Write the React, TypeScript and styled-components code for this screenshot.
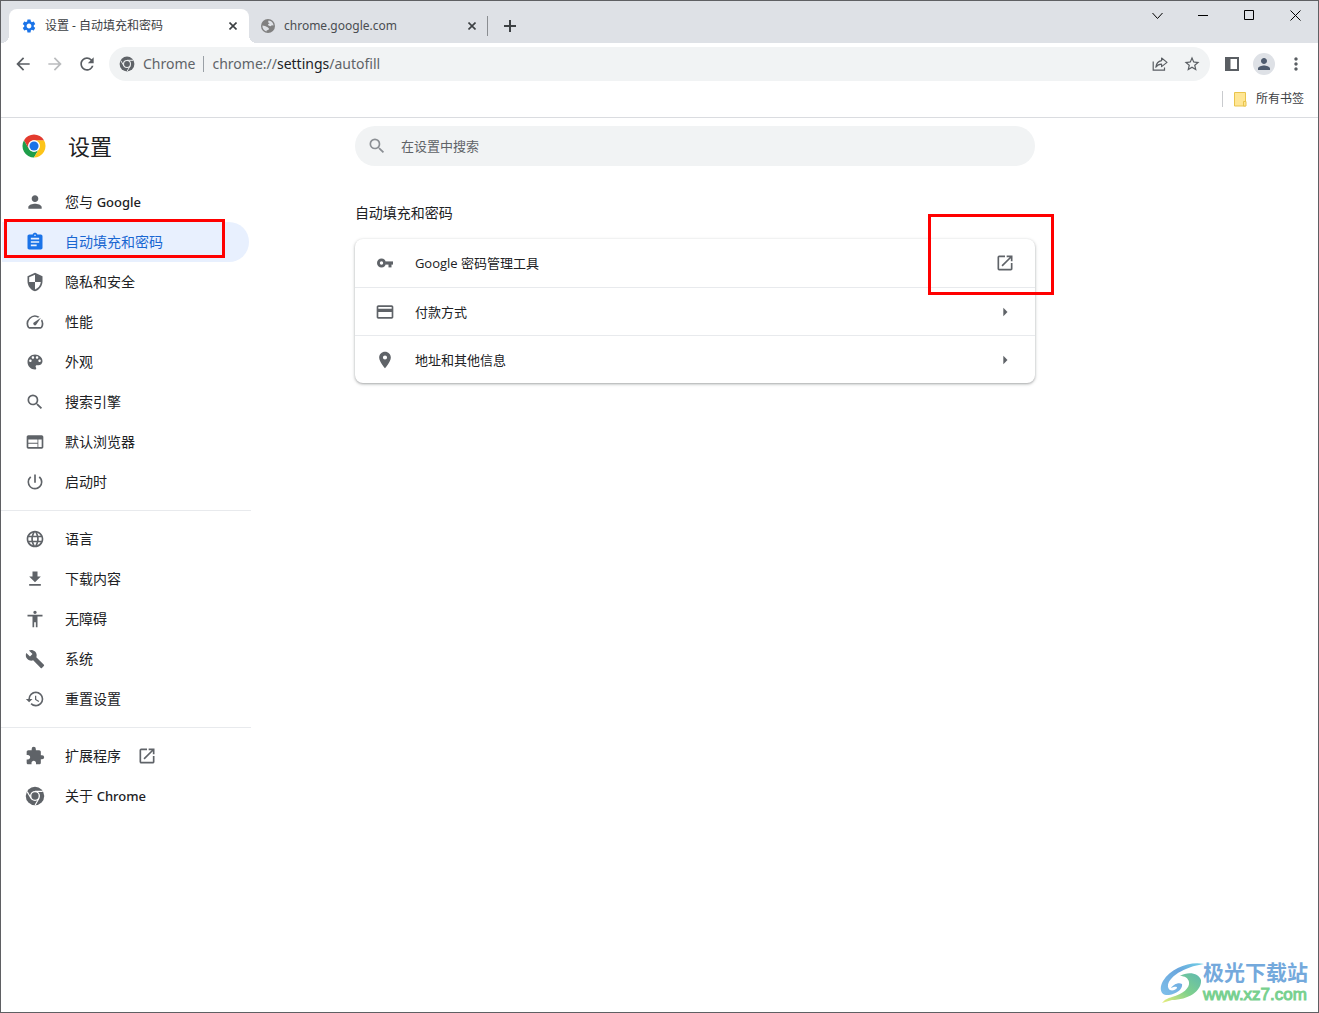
import React from 'react';
import styled, { createGlobalStyle, css } from 'styled-components';
import type { IconType } from 'react-icons';
import {
  MdAccessibility,
  MdAssignment,
  MdBuild,
  MdCreditCard,
  MdExtension,
  MdFileDownload,
  MdHistory,
  MdLanguage,
  MdMoreVert,
  MdOpenInNew,
  MdPerson,
  MdPlace,
  MdPowerSettingsNew,
  MdSearch,
  MdSecurity,
  MdSettings,
  MdSpeed,
  MdStarBorder,
  MdWeb,
  MdArrowBack,
  MdArrowForward,
  MdArrowRight,
  MdRefresh,
} from 'react-icons/md';

const color = {
  frame: '#5f6063',
  strip: '#dee1e6',
  field: '#f1f3f4',
  text: '#202124',
  muted: '#5f6368',
  accent: '#1a73e8',
  accentText: '#1967d2',
  accentBg: '#e8f0fe',
  line: '#e8eaed',
  mark: '#ff0000',
};

const browserFont = '"Noto Sans", "Noto Sans CJK SC", sans-serif';

const GlobalStyle = createGlobalStyle`
  *, *::before, *::after { box-sizing: border-box; }
  body {
    margin: 0;
    background: #fff;
    color: ${color.text};
    font-family: "Open Sans", "Noto Sans CJK SC", sans-serif;
    font-size: 14px;
    line-height: 20px;
  }
  button, input { font: inherit; color: inherit; }
  button { padding: 0; border: 0; background: none; }
  a { color: inherit; text-decoration: none; }
  h1, h2 { margin: 0; font-weight: 400; }
  svg { display: block; flex: none; }
`;

const Window = styled.div`
  position: relative;
  display: flex;
  flex-direction: column;
  min-height: 100vh;
  border: 1px solid ${color.frame};
`;

/* ---------- tab strip ---------- */

const TabStrip = styled.header`
  display: flex;
  align-items: flex-end;
  height: 42px;
  padding-left: 8px;
  background: ${color.strip};
  font-family: ${browserFont};
`;

const Tab = styled.div<{ $active?: boolean }>`
  position: relative;
  display: flex;
  align-items: center;
  width: ${(p) => (p.$active ? 240 : 238)}px;
  height: 34px;
  padding: ${(p) => (p.$active ? '0 8px 0 12px' : '0 7px 0 11px')};
  border-radius: 8px 8px 0 0;
  color: ${(p) => (p.$active ? '#3c4043' : '#4a4d51')};
  ${(p) =>
    p.$active &&
    css`
      background: #fff;
      &::before,
      &::after {
        content: '';
        position: absolute;
        bottom: 0;
        width: 8px;
        height: 8px;
      }
      &::before {
        left: -8px;
        background: radial-gradient(circle at 0 0, transparent 8px, #fff 8px);
      }
      &::after {
        right: -8px;
        background: radial-gradient(circle at 100% 0, transparent 8px, #fff 8px);
      }
    `}
`;

const TabTitle = styled.span`
  flex: 1;
  margin-left: 8px;
  font-size: 12px;
  line-height: 22px;
  white-space: nowrap;
`;

const SmallButton = styled.button`
  display: grid;
  place-items: center;
  width: 16px;
  height: 16px;
  color: #3c4043;
`;

const TabDivider = styled.span`
  align-self: flex-end;
  width: 1px;
  height: 20px;
  margin-bottom: 7px;
  background: #8a8d91;
`;

const NewTab = styled.button`
  display: grid;
  place-items: center;
  width: 28px;
  height: 28px;
  margin: 0 0 3px 8px;
  color: #3c4043;
`;

const WindowControls = styled.div`
  display: flex;
  align-self: flex-start;
  margin-left: auto;
`;

const ControlButton = styled.button`
  display: grid;
  place-items: center;
  width: 46px;
  height: 28px;
  color: #000;
`;

/* ---------- toolbar ---------- */

const Toolbar = styled.div`
  display: flex;
  align-items: center;
  gap: 8px;
  height: 42px;
  padding: 0 8px;
  font-family: ${browserFont};
`;

const ButtonGroup = styled.div`
  display: flex;
  align-items: center;
  gap: 4px;
`;

const ToolButton = styled.button<{ $faded?: boolean }>`
  display: grid;
  place-items: center;
  width: 28px;
  height: 28px;
  color: ${(p) => (p.$faded ? '#babcbe' : '#5a5e63')};
`;

const Omnibox = styled.div`
  display: flex;
  flex: 1;
  align-items: center;
  height: 34px;
  padding: 0 4px 0 10px;
  border-radius: 17px;
  background: ${color.field};
  color: ${color.muted};
  font-size: 14px;
`;

const SiteChip = styled.button`
  display: flex;
  align-items: center;
  gap: 8px;
`;

const ChipDivider = styled.span`
  width: 1px;
  height: 16px;
  margin: 0 8px;
  background: #9aa0a6;
`;

const Address = styled.div`
  flex: 1;
  outline: none;
  white-space: nowrap;
`;

const Host = styled.span`
  color: ${color.text};
`;

const Avatar = styled.span`
  display: grid;
  place-items: center;
  width: 22px;
  height: 22px;
  border-radius: 50%;
  background: ${color.strip};
  color: #4f5b6e;
`;

const BookmarkBar = styled.div`
  display: flex;
  align-items: center;
  justify-content: flex-end;
  height: 33px;
  padding: 0 14px 4px;
  border-bottom: 1px solid #dadce0;
  font-family: ${browserFont};
`;

const BookmarkDivider = styled.span`
  width: 1px;
  height: 16px;
  margin-right: 11px;
  background: #c9cbce;
`;

const Bookmark = styled.button`
  display: flex;
  align-items: center;
  gap: 9px;
  color: #3c4043;
  font-size: 12px;
  line-height: 22px;
`;

/* ---------- settings page ---------- */

const Page = styled.div`
  display: grid;
  grid-template-columns: minmax(250px, 5fr) minmax(auto, 680px) 4fr;
  flex: 1;
`;

const Sidebar = styled.aside`
  width: 250px;
`;

const Brand = styled.div`
  display: flex;
  align-items: center;
  gap: 22px;
  height: 56px;
  padding-left: 21px;
`;

const Title = styled.h1`
  font-size: 22px;
  line-height: 32px;
`;

const Menu = styled.nav`
  padding-top: 8px;
`;

const MenuItem = styled.a<{ $selected?: boolean }>`
  position: relative;
  display: flex;
  align-items: center;
  height: 40px;
  margin: 0 2px 0 1px;
  padding-left: 23px;
  border-radius: 0 20px 20px 0;
  color: ${(p) => (p.$selected ? color.accentText : color.text)};
  background: ${(p) => (p.$selected ? color.accentBg : 'transparent')};
  > svg {
    color: ${(p) => (p.$selected ? color.accent : color.muted)};
  }
`;

const MenuLabel = styled.span`
  margin: 0 16px 0 20px;
`;

const Latin = styled.span`
  font-family: "Noto Sans", sans-serif;
  font-weight: 500;
  font-size: 13px;
`;

const MenuDivider = styled.hr`
  height: 1px;
  margin: 8px 0;
  border: 0;
  background: ${color.line};
`;

const Content = styled.main`
  padding-top: 8px;
`;

const SearchBox = styled.label`
  display: flex;
  align-items: center;
  gap: 14px;
  height: 40px;
  padding: 0 12px;
  border-radius: 20px;
  background: ${color.field};
  color: #8b8f94;
`;

const SearchInput = styled.input`
  flex: 1;
  padding: 0;
  border: 0;
  outline: none;
  background: transparent;
  font-size: 13px;
  &::placeholder {
    color: ${color.muted};
    opacity: 1;
  }
`;

const SectionTitle = styled.h2`
  padding: 37px 0 16px;
  font-size: 14px;
  line-height: 20px;
`;

const Card = styled.div`
  border-radius: 8px;
  background: #fff;
  box-shadow: 0 1px 2px rgba(60, 64, 67, 0.3), 0 1px 3px 1px rgba(60, 64, 67, 0.15);
`;

const CardRow = styled.a`
  position: relative;
  display: flex;
  align-items: center;
  gap: 20px;
  height: 48px;
  padding: 0 20px;
  color: ${color.muted};
  & + & {
    border-top: 1px solid ${color.line};
  }
`;

const RowLabel = styled.span`
  flex: 1;
  color: ${color.text};
  font-size: 13px;
`;

const MenuMark = styled.span`
  position: absolute;
  top: -3px;
  left: 2px;
  width: 221px;
  height: 39px;
  border: 3px solid ${color.mark};
`;

const RowMark = styled.span`
  position: absolute;
  z-index: 1;
  top: -25px;
  right: -19px;
  width: 126px;
  height: 81px;
  border: 3px solid ${color.mark};
`;

/* ---------- watermark ---------- */

const Watermark = styled.a`
  position: absolute;
  right: 10px;
  bottom: 7px;
  display: flex;
  align-items: center;
  font-family: "Liberation Sans", "Noto Sans CJK SC", sans-serif;
  white-space: nowrap;
`;

const WatermarkText = styled.span`
  display: flex;
  flex-direction: column;
  margin-left: -3px;
`;

const WatermarkName = styled.span`
  color: #74a9dc;
  font-size: 21px;
  font-weight: 700;
  line-height: 24px;
`;

const WatermarkSite = styled.span`
  color: #78d08f;
  -webkit-text-stroke: 1px #78d08f;
  font-size: 17px;
  line-height: 20px;
`;

/* ---------- drawings ---------- */

const RED = 'M3.22 12A24 24 0 0 1 44.78 12L24 12A12 12 0 0 0 13.61 30Z';
const YELLOW = 'M44.78 12A24 24 0 0 1 24 48L34.39 30A12 12 0 0 0 24 12Z';
const GREEN = 'M24 48A24 24 0 0 1 3.22 12L13.61 30A12 12 0 0 0 34.39 30Z';

const ChromeLogo = () => (
  <svg width="24" height="24" viewBox="-1 -1 50 50" aria-hidden>
    <circle cx="24" cy="24" r="13" fill="#fff" />
    <path d={GREEN} fill="#1e9e4a" />
    <path d={YELLOW} fill="#fcc419" />
    <path d={RED} fill="#e33b2e" />
    <circle cx="24" cy="24" r="12" fill="#fff" />
    <circle cx="24" cy="24" r="9.5" fill="#1a73e8" />
  </svg>
);

const ChromeMono = ({ size, gap = '#fff' }: { size: number; gap?: string }) => (
  <svg width={size} height={size} viewBox="-2 -2 52 52" aria-hidden>
    <circle cx="24" cy="24" r="24" fill="#5f6368" />
    <circle cx="24" cy="24" r="13" fill={gap} />
    <path d="M24 12H44M13.61 30L3.6 12.6M34.39 30L24.4 47.4" stroke={gap} strokeWidth="3" />
    <circle cx="24" cy="24" r="9.5" fill="#5f6368" />
  </svg>
);

const PaletteIcon = () => (
  <svg width="20" height="20" viewBox="0 0 24 24" fill="currentColor" aria-hidden>
    <path d="M12 3c-4.97 0-9 4.03-9 9s4.03 9 9 9c.83 0 1.5-.67 1.5-1.5 0-.39-.15-.74-.39-1.01-.23-.26-.38-.61-.38-.99 0-.83.67-1.5 1.5-1.5H16c2.76 0 5-2.24 5-5 0-4.42-4.03-8-9-8zm-5.5 9c-.83 0-1.5-.67-1.5-1.5S5.67 9 6.5 9 8 9.67 8 10.5 7.33 12 6.5 12zm3-4C8.67 8 8 7.33 8 6.5S8.67 5 9.5 5s1.5.67 1.5 1.5S10.33 8 9.5 8zm5 0c-.83 0-1.5-.67-1.5-1.5S13.67 5 14.5 5s1.5.67 1.5 1.5S15.33 8 14.5 8zm3 4c-.83 0-1.5-.67-1.5-1.5S16.67 9 17.5 9s1.5.67 1.5 1.5-.67 1.5-1.5 1.5z" />
  </svg>
);

const KeyIcon = () => (
  <svg width="20" height="20" viewBox="0 0 20 20" fill="none" stroke="currentColor" aria-hidden>
    <circle cx="6.5" cy="10" r="3.1" strokeWidth="2.8" />
    <path d="M10.5 10H18" strokeWidth="3.2" />
    <path d="M15 10V14.4" strokeWidth="3" />
  </svg>
);

const GlobeIcon = () => (
  <svg width="16" height="16" viewBox="0 0 16 16" aria-hidden>
    <circle cx="8" cy="8" r="7" fill="#808080" />
    <path
      d="M8.6 2.4C11.4 2.6 13.4 4.8 13.6 7.4L11.8 7.2L10.6 8.2L8.4 7.6L8 6.2L9.6 5.2L8 4.2Z"
      fill={color.strip}
    />
    <path d="M2.4 7.4L5 8L7.6 9.2L9 10.4L8.4 12L6.8 12.2L6.4 13.4C3.8 12.6 2.2 10.2 2.4 7.4Z" fill={color.strip} />
  </svg>
);

const CrossIcon = () => (
  <svg width="8" height="8" viewBox="0 0 8 8" stroke="currentColor" strokeWidth="1.6" aria-hidden>
    <path d="M0.5 0.5L7.5 7.5M7.5 0.5L0.5 7.5" />
  </svg>
);

const PlusIcon = () => (
  <svg width="12" height="12" viewBox="0 0 12 12" stroke="currentColor" strokeWidth="2" aria-hidden>
    <path d="M6 0V12M0 6H12" />
  </svg>
);

const glyph = {
  tabs: 'M0.5 3L5.5 8.5L10.5 3',
  minimize: 'M0 5.5H10',
  maximize: 'M0.5 0.5H9.5V9.5H0.5Z',
  close: 'M0.5 0.5L10.5 10.5M10.5 0.5L0.5 10.5',
};

const ControlIcon = ({ d }: { d: string }) => (
  <svg width="11" height="11" viewBox="0 0 11 11" fill="none" stroke="currentColor" aria-hidden>
    <path d={d} />
  </svg>
);

const ShareIcon = () => (
  <svg width="16" height="16" viewBox="0 0 16 16" fill="none" stroke="currentColor" strokeWidth="1.2" aria-hidden>
    <path d="M1.2 5.5V14.2H12.5V11.5" />
    <path d="M9.6 2L15 6.4L9.6 10.6V8.2C7 8.2 5.2 9.2 3.8 11.2C4.2 7.6 6.2 5.2 9.6 4.6Z" strokeLinejoin="round" />
  </svg>
);

const SidePanelIcon = () => (
  <svg width="14" height="14" viewBox="0 0 14 14" aria-hidden>
    <path d="M0 0H14V14H0ZM5.5 2V12H12V2Z" fill="currentColor" fillRule="evenodd" />
  </svg>
);

const FolderIcon = () => (
  <svg width="13" height="15" viewBox="0 0 13 15" fill="#ffe694" stroke="#e9c44c" aria-hidden>
    <path d="M0.5 0.5H11.5V14H0.5Z" />
    <path d="M9.5 9.5H12V14H9.5Z" />
  </svg>
);

const AuroraLogo = () => (
  <svg width="46" height="42" viewBox="0 0 46 42" aria-hidden>
    <defs>
      <linearGradient id="auroraBlue" x1="1" y1="0" x2="0" y2="1">
        <stop offset="0" stopColor="#6fd0e6" />
        <stop offset="0.4" stopColor="#6aa6dd" />
        <stop offset="1" stopColor="#7fc0ea" />
      </linearGradient>
      <linearGradient id="auroraGreen" x1="1" y1="0" x2="0" y2="1">
        <stop offset="0" stopColor="#5fb9b0" />
        <stop offset="0.5" stopColor="#7fd08c" />
        <stop offset="1" stopColor="#eaee7c" />
      </linearGradient>
    </defs>
    <path
      d="M44 2C30 -1 11 6 3 19C-2 28 2 34 9 33C17 32 23 27 22 22C18 20 13 23 11 26C14 25 17 24 17 26C15 29 9 30 8 25C7 16 23 5 44 2Z"
      fill="url(#auroraBlue)"
    />
    <path
      d="M20 14C28 9 39 11 41 18C42 29 28 38 12 38L2 41C5 37 9 36 12 35C23 32 30 26 29 20C28 16 25 14 20 14Z"
      fill="url(#auroraGreen)"
    />
  </svg>
);

/* ---------- data ---------- */

type Entry = {
  label: string;
  latin?: string;
  icon: IconType | 'chrome' | 'palette';
  selected?: boolean;
  external?: boolean;
};

const menuGroups: Entry[][] = [
  [
    { label: '您与 ', latin: 'Google', icon: MdPerson },
    { label: '自动填充和密码', icon: MdAssignment, selected: true },
    { label: '隐私和安全', icon: MdSecurity },
    { label: '性能', icon: MdSpeed },
    { label: '外观', icon: 'palette' },
    { label: '搜索引擎', icon: MdSearch },
    { label: '默认浏览器', icon: MdWeb },
    { label: '启动时', icon: MdPowerSettingsNew },
  ],
  [
    { label: '语言', icon: MdLanguage },
    { label: '下载内容', icon: MdFileDownload },
    { label: '无障碍', icon: MdAccessibility },
    { label: '系统', icon: MdBuild },
    { label: '重置设置', icon: MdHistory },
  ],
  [
    { label: '扩展程序', icon: MdExtension, external: true },
    { label: '关于 ', latin: 'Chrome', icon: 'chrome' },
  ],
];

const cardRows = [
  { label: 'Google 密码管理工具', icon: <KeyIcon />, external: true },
  { label: '付款方式', icon: <MdCreditCard size={20} />, external: false },
  { label: '地址和其他信息', icon: <MdPlace size={20} />, external: false },
];

const EntryIcon = ({ icon: Icon }: { icon: Entry['icon'] }) => {
  if (Icon === 'chrome') return <ChromeMono size={20} />;
  if (Icon === 'palette') return <PaletteIcon />;
  return <Icon size={20} />;
};

const MenuEntry = ({ label, latin, icon, selected, external }: Entry) => (
  <MenuItem href="#" $selected={selected} aria-current={selected ? 'page' : undefined}>
    <EntryIcon icon={icon} />
    <MenuLabel>
      {label}
      {latin && <Latin>{latin}</Latin>}
    </MenuLabel>
    {external && <MdOpenInNew size={20} />}
    {selected && <MenuMark />}
  </MenuItem>
);

export default function App() {
  return (
    <>
      <GlobalStyle />
      <Window>
        <TabStrip>
          <Tab $active>
            <MdSettings size={16} color={color.accent} />
            <TabTitle>设置 - 自动填充和密码</TabTitle>
            <SmallButton aria-label="关闭标签页">
              <CrossIcon />
            </SmallButton>
          </Tab>
          <Tab>
            <GlobeIcon />
            <TabTitle>chrome.google.com</TabTitle>
            <SmallButton aria-label="关闭标签页">
              <CrossIcon />
            </SmallButton>
          </Tab>
          <TabDivider />
          <NewTab aria-label="新标签页">
            <PlusIcon />
          </NewTab>
          <WindowControls>
            <ControlButton aria-label="搜索标签页">
              <ControlIcon d={glyph.tabs} />
            </ControlButton>
            <ControlButton aria-label="最小化">
              <ControlIcon d={glyph.minimize} />
            </ControlButton>
            <ControlButton aria-label="最大化">
              <ControlIcon d={glyph.maximize} />
            </ControlButton>
            <ControlButton aria-label="关闭">
              <ControlIcon d={glyph.close} />
            </ControlButton>
          </WindowControls>
        </TabStrip>

        <Toolbar>
          <ButtonGroup>
            <ToolButton aria-label="后退">
              <MdArrowBack size={20} />
            </ToolButton>
            <ToolButton aria-label="前进" $faded>
              <MdArrowForward size={20} />
            </ToolButton>
            <ToolButton aria-label="重新加载">
              <MdRefresh size={20} />
            </ToolButton>
          </ButtonGroup>
          <Omnibox>
            <SiteChip>
              <ChromeMono size={16} gap={color.field} />
              Chrome
            </SiteChip>
            <ChipDivider />
            <Address role="textbox" aria-label="地址栏" contentEditable suppressContentEditableWarning spellCheck={false}>
              chrome://<Host>settings</Host>/autofill
            </Address>
            <ButtonGroup>
              <ToolButton aria-label="分享">
                <ShareIcon />
              </ToolButton>
              <ToolButton aria-label="添加书签">
                <MdStarBorder size={18} />
              </ToolButton>
            </ButtonGroup>
          </Omnibox>
          <ButtonGroup>
            <ToolButton aria-label="侧边栏">
              <SidePanelIcon />
            </ToolButton>
            <ToolButton aria-label="个人资料">
              <Avatar>
                <MdPerson size={18} />
              </Avatar>
            </ToolButton>
            <ToolButton aria-label="菜单">
              <MdMoreVert size={20} />
            </ToolButton>
          </ButtonGroup>
        </Toolbar>

        <BookmarkBar>
          <BookmarkDivider />
          <Bookmark>
            <FolderIcon />
            所有书签
          </Bookmark>
        </BookmarkBar>

        <Page>
          <Sidebar>
            <Brand>
              <ChromeLogo />
              <Title>设置</Title>
            </Brand>
            <Menu>
              {menuGroups.map((group, i) => (
                <React.Fragment key={group[0].label}>
                  {i > 0 && <MenuDivider />}
                  {group.map((entry) => (
                    <MenuEntry key={entry.label} {...entry} />
                  ))}
                </React.Fragment>
              ))}
            </Menu>
          </Sidebar>
          <Content>
            <SearchBox>
              <MdSearch size={20} />
              <SearchInput type="text" placeholder="在设置中搜索" aria-label="在设置中搜索" />
            </SearchBox>
            <SectionTitle>自动填充和密码</SectionTitle>
            <Card>
              {cardRows.map(({ label, icon, external }) => (
                <CardRow key={label} href="#">
                  {icon}
                  <RowLabel>{label}</RowLabel>
                  {external ? <MdOpenInNew size={20} /> : <MdArrowRight size={20} />}
                  {external && <RowMark />}
                </CardRow>
              ))}
            </Card>
          </Content>
        </Page>

        <Watermark href="#">
          <AuroraLogo />
          <WatermarkText>
            <WatermarkName>极光下载站</WatermarkName>
            <WatermarkSite>www.xz7.com</WatermarkSite>
          </WatermarkText>
        </Watermark>
      </Window>
    </>
  );
}
